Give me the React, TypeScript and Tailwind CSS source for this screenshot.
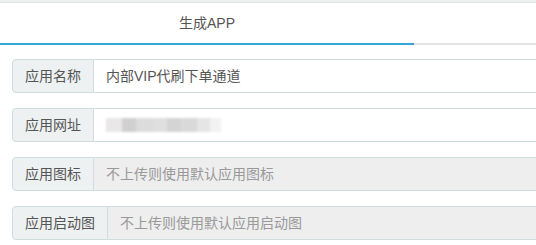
const rows = [
  { label: '应用名称', value: '内部VIP代刷下单通道', kind: 'text' },
  { label: '应用网址', value: '', kind: 'blur' },
  { label: '应用图标', value: '不上传则使用默认应用图标', kind: 'disabled' },
  { label: '应用启动图', value: '不上传则使用默认应用启动图', kind: 'disabled' },
];

// mosaic blocks covering the hidden url
const mosaic = ['#e9e7e7', '#d0d0d0', '#dcdcdc', '#dfdfdf', '#d4d4d4', '#d9d9d9', '#e5e5e5', '#f2f2f2'];
const mosaicW = [16, 14, 17, 14, 14, 16, 13, 11];

function BlurredUrl() {
  return (
    <div className="flex h-[14px] rounded-sm blur-[1px]">
      {mosaic.map((c, i) => (
        <div key={i} style={{ background: c, width: mosaicW[i] }} className="h-full" />
      ))}
    </div>
  );
}

export default function App() {
  return (
    <div
      className="w-[536px] h-[245px] overflow-hidden bg-white text-[#555]"
      style={{ fontFamily: '"Liberation Sans", "Noto Sans CJK SC", sans-serif' }}
    >
      <div className="h-[3px] bg-[#eef0f0] border-b border-[#e2e6e6]" />

      {/* tab header */}
      <div className="flex border-b-2 border-[#e4e4e4]">
        <div className="w-[414px] h-[42px] -mb-[2px] border-b-2 border-[#33a7d3] flex items-center justify-center text-[14px] text-[#555] pt-[1px]">
          生成APP
        </div>
      </div>

      <div className="pl-[12px] pt-[14px] flex flex-col gap-[15px]">
        {rows.map((r) => (
          <div key={r.label} className="flex h-[34px] -mr-[20px]">
            <div className="shrink-0 flex items-center px-[12px] text-[14px] bg-[#eef1f2] border border-[#cfdcde] rounded-l-[4px]">
              {r.label}
            </div>
            <div
              className={
                'flex-1 flex items-center pl-[12px] text-[14px] border border-l-0 border-[#cfdcde] ' +
                (r.kind === 'disabled' ? 'bg-[#eeeeee] text-[#999]' : 'bg-white text-[#555]')
              }
            >
              {r.kind === 'blur' ? <BlurredUrl /> : r.value}
            </div>
          </div>
        ))}
      </div>
    </div>
  );
}
